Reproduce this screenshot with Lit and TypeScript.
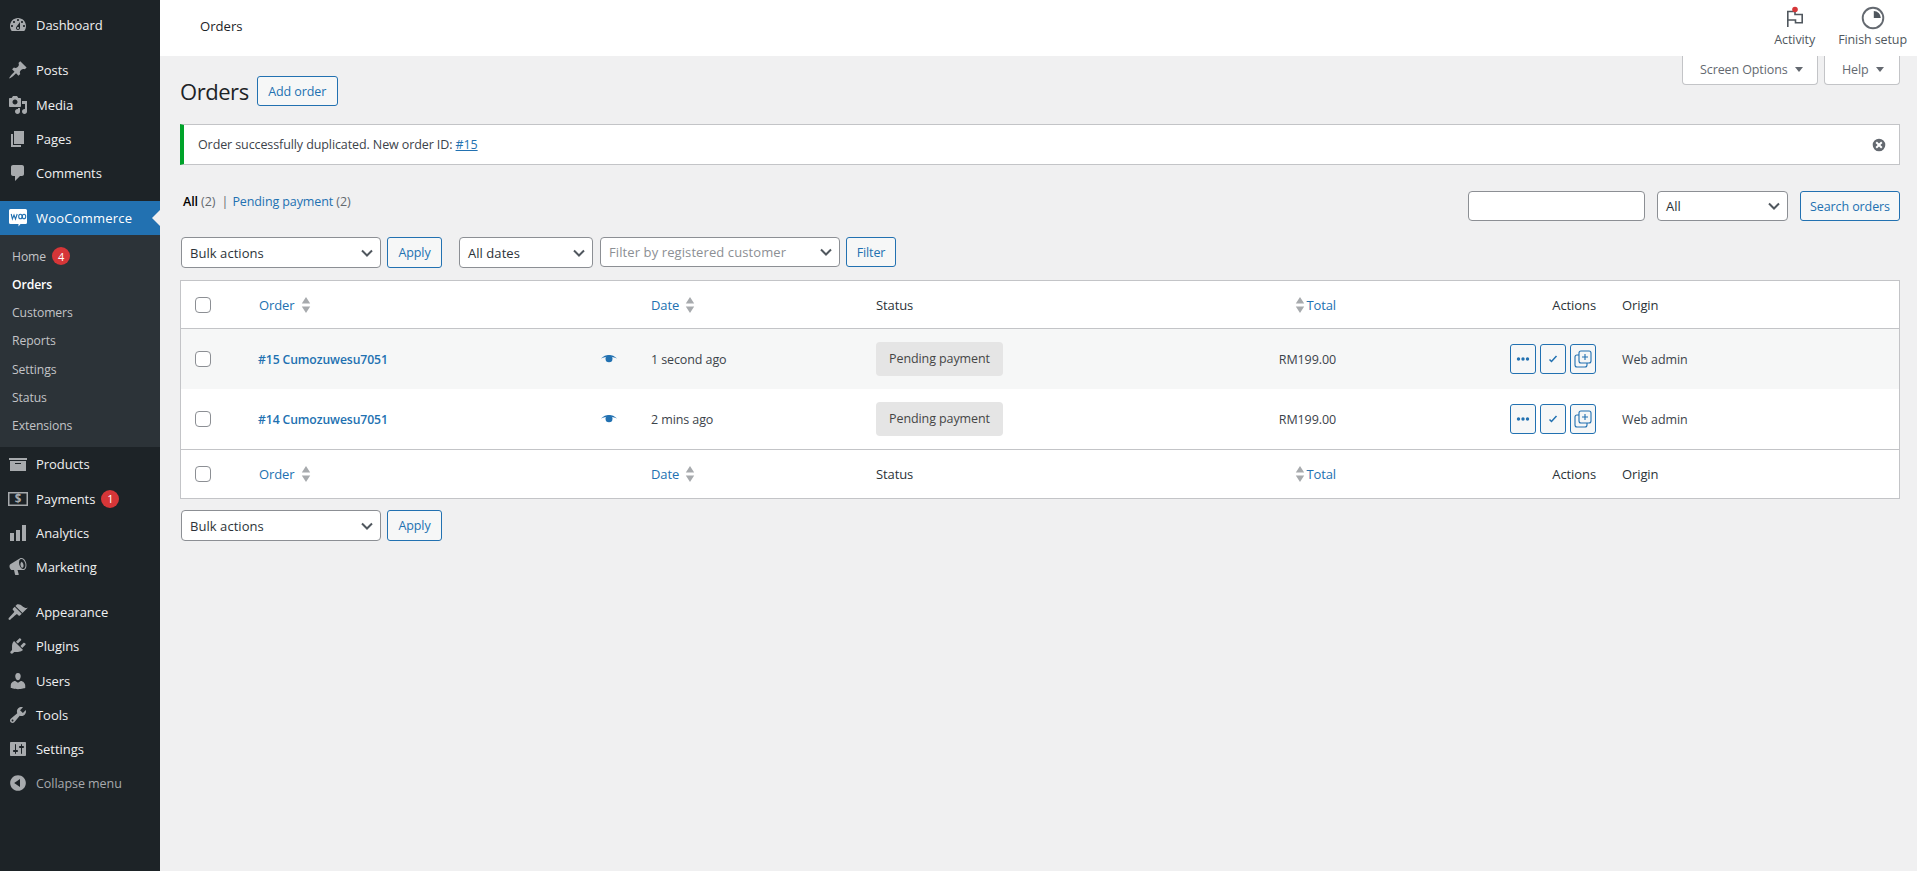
import { LitElement, html, css } from "lit";
import { customElement } from "lit/decorators.js";

const ICONS: Record<string, string> = {
  dashboard: "M3.76 16h12.48c1.1-1.37 1.76-3.11 1.76-5 0-4.42-3.58-8-8-8s-8 3.58-8 8c0 1.89.66 3.63 1.76 5zM10 4c.55 0 1 .45 1 1s-.45 1-1 1-1-.45-1-1 .45-1 1-1zM6 6c.55 0 1 .45 1 1s-.45 1-1 1-1-.45-1-1 .45-1 1-1zm8 0c.55 0 1 .45 1 1s-.45 1-1 1-1-.45-1-1 .45-1 1-1zm-5.37 5.55L12 7v6c0 1.1-.9 2-2 2s-2-.9-2-2c0-.57.24-1.08.63-1.45zM4 10c.55 0 1 .45 1 1s-.45 1-1 1-1-.45-1-1 .45-1 1-1zm12 0c.55 0 1 .45 1 1s-.45 1-1 1-1-.45-1-1 .45-1 1-1zm-5 3c0-.55-.45-1-1-1s-1 .45-1 1 .45 1 1 1 1-.45 1-1z",
  post: "M10.44 3.02l1.82-1.82 6.36 6.35-1.83 1.82c-1.05-.68-2.48-.57-3.41.36l-.75.75c-.92.93-1.04 2.35-.35 3.41l-1.83 1.82-2.41-2.41-2.8 2.79c-.42.42-3.38 2.71-3.8 2.29s1.86-3.39 2.28-3.81l2.79-2.79L4.1 9.36l1.83-1.82c1.05.69 2.48.57 3.41-.36l.75-.75c.93-.92 1.05-2.35.35-3.41z",
  media: "M13 11V4c0-.55-.45-1-1-1h-1.67L9 1H5L3.67 3H2c-.55 0-1 .45-1 1v7c0 .55.45 1 1 1h10c.55 0 1-.45 1-1zM7 4.5c1.38 0 2.5 1.12 2.5 2.5S8.38 9.5 7 9.5 4.5 8.38 4.5 7 5.62 4.5 7 4.5zM14 6h5v10.5c0 1.38-1.12 2.5-2.5 2.5S14 17.88 14 16.5s1.12-2.5 2.5-2.5c.17 0 .34.02.5.05V9h-3V6zm-4 8.05V13h2v3.5c0 1.38-1.12 2.5-2.5 2.5S7 17.88 7 16.5 8.12 14 9.5 14c.17 0 .34.02.5.05z",
  page: "M6 15V2h10v13H6zm-1 1h8v2H3V5h2v11z",
  comments: "M5 2h9c1.1 0 2 .9 2 2v7c0 1.1-.9 2-2 2h-2l-5 5v-5H5c-1.1 0-2-.9-2-2V4c0-1.1.9-2 2-2z",
  archive: "M19 4v2H1V4h18zM2 7h16v10H2V7zm11 3V9H7v1h6z",
  chart: "M18 18V2h-4v16h4zm-6 0V7H8v11h4zm-6 0v-8H2v8h4z",
  megaphone: "M18.15 5.94c.46 1.62.38 3.22-.02 4.48-.42 1.28-1.26 2.18-2.3 2.48-.16.06-.26.06-.4.06-.06.02-.12.02-.18.02-.06.02-.14.02-.22.02H9.5l1.3 4.5c.02.14-.06.26-.14.34-.08.1-.24.16-.34.16H7.5c-.1 0-.26-.06-.34-.16-.08-.08-.16-.2-.14-.34l-1-4.5H4.25c-.5.06-1.08-.18-1.54-.62s-.88-1.08-1.06-1.88c-.24-.8-.2-1.56-.02-2.2.18-.62.58-1.08 1.06-1.3l9-5.42c.1-.06.18-.1.24-.16.06-.04.14-.08.24-.12.16-.08.28-.12.5-.18 1.04-.3 2.24.1 3.22.98s1.84 2.24 2.26 3.86zm-2.58 5.98c.4-.1.74-.34 1.04-.7.58-.7.86-1.76.86-3.04 0-.64-.1-1.3-.28-1.98-.34-1.36-1.02-2.5-1.78-3.24s-1.68-1.1-2.46-.88c-.82.22-1.4.96-1.7 2-.32 1.04-.28 2.36.06 3.72.38 1.36 1 2.5 1.8 3.24.78.74 1.62 1.1 2.46.88zm-2.54-7.08c.22-.04.42-.02.62.04.38.16.76.48 1.1 1s.58 1.14.7 1.84c.16.68.16 1.34.04 1.9-.14.56-.44 1.02-.89 1.14-.42.12-.88-.14-1.24-.62-.34-.5-.62-1.12-.78-1.8-.18-.68-.2-1.36-.02-1.92.14-.54.42-.98.9-1.08z",
  appearance: "M14.48 11.06L7.41 3.99l1.5-1.5c.5-.56 2.3-.47 3.51.32 1.21.8 1.43 1.28 2.91 2.1 1.18.64 2.45 1.26 4.45.85zm-.71.71L6.7 4.7 4.93 6.47c-.39.39-.39 1.02 0 1.41l1.06 1.06c.39.39.39 1.03 0 1.42-.6.6-5.4 6.1-5.4 6.1-.51.51.87 1.89 1.38 1.38 0 0 5.5-4.8 6.1-5.4.39-.39 1.02-.39 1.41 0l1.06 1.06c.39.39 1.02.39 1.41 0z",
  plugins: "M13.11 4.36L9.87 7.6 8 5.73l3.24-3.24c.35-.34 1.05-.2 1.56.32.52.51.66 1.21.31 1.55zm-8 1.77l.91-1.12 9.01 9.01-1.19.84c-.71.71-2.63 1.16-3.82 1.16H6.14L4.9 17.26c-.59.59-1.54.59-2.12 0-.59-.58-.59-1.53 0-2.12l1.24-1.24v-3.88c0-1.13.4-3.19 1.09-3.89zm7.26 3.97l3.24-3.24c.34-.35 1.04-.21 1.55.31.52.51.66 1.21.31 1.55l-3.24 3.25z",
  users: "M10 9.25c-2.27 0-2.73-3.44-2.73-3.44C7 4.02 7.82 2 9.97 2c2.16 0 2.98 2.02 2.71 3.81 0 0-.41 3.44-2.68 3.44zm0 2.57L12.72 10c2.39 0 4.52 2.33 4.52 4.53v2.49s-3.65 1.13-7.24 1.13c-3.65 0-7.24-1.13-7.24-1.13v-2.49c0-2.25 1.94-4.48 4.47-4.48z",
  tools: "M16.68 9.77c-1.34 1.34-3.3 1.67-4.95.99l-5.41 6.52c-.99.99-2.59.99-3.58 0s-.99-2.59 0-3.57l6.52-5.42c-.68-1.65-.35-3.61.99-4.95 1.28-1.28 3.12-1.62 4.72-1.06l-2.89 2.89 2.82 2.82 2.86-2.87c.53 1.58.18 3.39-1.08 4.65zM3.81 16.21c.4.39 1.04.39 1.43 0 .4-.4.4-1.04 0-1.43-.39-.4-1.03-.4-1.43 0-.39.39-.39 1.03 0 1.43z",
  settings: "M18 16V4c0-.55-.45-1-1-1H3c-.55 0-1 .45-1 1v12c0 .55.45 1 1 1h14c.55 0 1-.45 1-1zM8 11h1c.55 0 1 .45 1 1s-.45 1-1 1H8v1.5c0 .28-.22.5-.5.5s-.5-.22-.5-.5V13H6c-.55 0-1-.45-1-1s.45-1 1-1h1V5.5c0-.28.22-.5.5-.5s.5.22.5.5V11zm5-2h-1c-.55 0-1-.45-1-1s.45-1 1-1h1V5.5c0-.28.22-.5.5-.5s.5.22.5.5V7h1c.55 0 1 .45 1 1s-.45 1-1 1h-1v5.5c0 .28-.22.5-.5.5s-.5-.22-.5-.5V9z",
  collapse: "M10 2.16c4.33 0 7.84 3.51 7.84 7.84s-3.51 7.84-7.84 7.84S2.16 14.33 2.16 10 5.71 2.16 10 2.16zm2 11.72V6.12L6.18 9.97z",
};

const dash = (k: string) => html`<svg class="dash" viewBox="0 0 20 20"><path d=${ICONS[k]}></path></svg>`;
const chevron = html`<svg class="chev" viewBox="0 0 16 16"><path d="M3 5.500 8 10.500 13 5.500" fill="none" stroke="currentColor" stroke-width="2"></path></svg>`;
const sort = html`<svg class="sort" viewBox="0 0 10 16"><path d="M5 0l4.200 6.400H.8zM5 16 .8 9.600h8.400z"></path></svg>`;
const eye = html`<svg class="eye" viewBox="0 0 16 10"><path d="M0 4.500C2.500 2 5 1 8 1s5.500 1 8 3.500C13.500 3.200 11 2.700 8 2.700S2.500 3.200 0 4.500z"></path><circle cx="8" cy="4.700" r="3.500"></circle></svg>`;

@customElement("app-root")
export class AppRoot extends LitElement {
  static styles = css`
    :host {
      display: flex;
      width: 100%;
      min-height: 871px;
      background: #f0f0f1;
      font-family: "Open Sans", "Noto Sans", sans-serif;
      font-size: 12.5px;
      color: #3c434a;
    }
    a { color: #2271b1; text-decoration: none; }
    .side {
      width: 160px;
      flex: none;
      background: #1d2327;
      padding-top: 8px;
      box-sizing: border-box;
    }
    .item {
      height: 34.2px;
      display: flex;
      align-items: center;
      color: #f0f0f1;
      font-size: 13px;
      letter-spacing: -0.05px;
    }
    .item .dash { width: 20px; height: 20px; margin: 0 8px; fill: #a7aaad; flex: none; }
    .sep { height: 11.2px; }
    .item.cur { height: 34px; background: #2271b1; color: #fff; position: relative; letter-spacing: 0.22px; }
    .item.cur::after {
      content: "";
      position: absolute;
      right: 0;
      top: 50%;
      margin-top: -8px;
      border: 8px solid transparent;
      border-right-color: #f0f0f1;
    }
    .item.dim { color: #a7aaad; font-size: 12.5px; }
    .badge {
      display: inline-flex;
      width: 18px;
      height: 18px;
      border-radius: 50%;
      background: #d63638;
      color: #fff;
      font-size: 11px;
      align-items: center;
      justify-content: center;
      margin-left: 6px;
    }
    .sub { background: #2c3338; padding: 7px 0 7.6px; }
    .sub div {
      height: 28.2px;
      display: flex;
      align-items: center;
      padding-left: 12px;
      color: #c3c4c7;
      font-size: 12.2px;
      letter-spacing: -0.1px;
    }
    .sub div.on { color: #fff; font-weight: 600; }
    .wrap { flex: 1; min-width: 0; position: relative; }
    .top {
      height: 56px;
      background: #fff;
      display: flex;
      justify-content: space-between;
      align-items: flex-start;
      padding: 0 10px 0 40px;
    }
    .top h2 { margin: 17px 0 0; font-size: 13.1px; font-weight: 500; color: #1d2327; line-height: 18px; }
    .tools { display: flex; gap: 23px; }
    .tool { display: flex; flex-direction: column; align-items: center; color: #50575e; font-size: 12.5px; padding-top: 5px; letter-spacing: -0.1px; }
    .tool svg { width: 26px; height: 26px; margin-bottom: 1px; }
    .tool span { line-height: 16px; }
    .meta {
      position: absolute;
      top: 56px;
      right: 17px;
      display: flex;
      gap: 6px;
    }
    .meta div {
      height: 29px;
      box-sizing: border-box;
      background: #fff;
      border: 1px solid #c3c4c7;
      border-top: 0;
      border-radius: 0 0 4px 4px;
      padding: 0 0 2px 17px;
      display: flex;
      align-items: center;
      gap: 7px;
      color: #646970;
      font-size: 12.5px;
      letter-spacing: -0.1px;
    }
    .meta .m1 { width: 136px; }
    .meta .m2 { width: 76px; }
    .meta i { border: 4px solid transparent; border-top: 5px solid #646970; border-bottom: 0; margin-top: 1px; }
    .body { padding: 20px 17px 0 20px; }
    .head { display: flex; align-items: center; gap: 8px; height: 30px; }
    h1 { margin: 0; font-size: 22px; font-weight: 400; color: #1d2327; letter-spacing: -0.45px; }
    .btn {
      height: 30px;
      box-sizing: border-box;
      border: 1px solid #2271b1;
      border-radius: 3px;
      background: #f6f7f7;
      color: #2271b1;
      font-size: 12.5px;
      display: inline-flex;
      align-items: center;
      justify-content: center;
      letter-spacing: -0.1px;
      flex: none;
    }
    .add { width: 81px; }
    .notice {
      margin-top: 18px;
      height: 41px;
      box-sizing: border-box;
      background: #fff;
      border: 1px solid #c3c4c7;
      border-left: 4px solid #00a32a;
      display: flex;
      align-items: center;
      justify-content: space-between;
      padding: 0 13px 0 14px;
      color: #3c434a;
      letter-spacing: -0.1px;
    }
    .notice a { text-decoration: underline; }
    .notice svg { width: 14px; height: 14px; fill: #646970; }
    .filters { display: flex; justify-content: space-between; margin-top: 26px; height: 30px; }
    .views { padding: 2px 0 0 3px; line-height: 18px; letter-spacing: -0.1px; color: #646970; }
    .views b { font-weight: 600; color: #000; }
    .views .bar { margin: 0 1px 0 3px; }
    .search { display: flex; gap: 12px; }
    .input {
      width: 177px;
      height: 30px;
      box-sizing: border-box;
      background: #fff;
      border: 1px solid #8c8f94;
      border-radius: 4px;
    }
    .sel {
      height: 31px;
      box-sizing: border-box;
      background: #fff;
      border: 1px solid #8c8f94;
      border-radius: 4px;
      padding: 0 5px 0 8px;
      display: flex;
      align-items: center;
      justify-content: space-between;
      color: #2c3338;
      font-size: 13px;
      letter-spacing: 0.05px;
      flex: none;
    }
    .sel.tall30 { height: 30px; }
    .chev { width: 16px; height: 16px; color: #50575e; flex: none; }
    .nav { display: flex; align-items: flex-start; margin-top: 16px; margin-left: 1px; }
    .nav.bottom { margin-top: 11px; }
    .sp6 { margin-left: 6px; }
    .sp7 { margin-left: 7px; }
    .sp17 { margin-left: 17px; }
    .w131 { width: 131px; }
    .w200 { width: 200px; }
    .w134 { width: 134px; }
    .w240 { width: 240px; }
    .w100 { width: 100px; }
    .w55 { width: 55px; height: 31px; }
    .w50 { width: 50px; }
    .ph { color: #8c8f94; font-size: 13px; letter-spacing: 0.1px; }
    table {
      width: 100%;
      table-layout: fixed;
      border-collapse: separate;
      border-spacing: 0;
      background: #fff;
      border: 1px solid #c3c4c7;
      margin-top: 12px;
      font-size: 12.5px;
      letter-spacing: -0.1px;
    }
    .c1 { width: 70px; } .c2 { width: 392px; } .c3 { width: 225px; } .c4 { width: 240px; } .c5 { width: 236px; } .c6 { width: 260px; }
    th, td { box-sizing: border-box; padding: 0 8px; text-align: left; font-weight: 400; vertical-align: middle; }
    thead th { height: 48px; border-bottom: 1px solid #c3c4c7; color: #2c3338; font-size: 13px; }
    tfoot th { height: 49px; border-top: 1px solid #c3c4c7; color: #2c3338; font-size: 13px; }
    tbody td { height: 60px; }
    tbody tr:nth-child(odd) td { background: #f6f7f7; }
    th.cb, td.cb { padding-left: 14px; }
    .box { appearance: none; display: block; width: 16px; height: 16px; box-sizing: border-box; background: #fff; border: 1px solid #8c8f94; border-radius: 4px; margin: 0; }
    .sort { width: 10px; height: 16px; fill: #a7aaad; vertical-align: -3px; margin-left: 6px; }
    th.r, td.r { text-align: right; }
    th.origin, td.origin { padding-left: 18px; }
    .total .sort { margin: 0 1px 0 0; }
    .ordercell { display: flex; justify-content: space-between; align-items: center; padding-right: 18px; }
    .ordername { font-weight: 600; font-size: 12.2px; margin-left: -1px; }
    .eye { width: 16px; height: 10px; fill: #2271b1; }
    .pill {
      display: inline-flex;
      height: 34px;
      width: 127px;
      align-items: center;
      justify-content: center;
      background: #e5e5e5;
      border-radius: 4px;
      color: #454545;
      margin-bottom: 1px;
    }
    .acts { display: flex; justify-content: flex-end; gap: 4px; }
    .acts .btn { width: 26px; border-radius: 3px; }
    .acts svg { display: block; }
    .woo { fill: #fff; }
    .wooline { fill: none; stroke: #2271b1; stroke-width: 1.1; }
    .pay { fill: none; stroke: #a7aaad; stroke-width: 1.5; }
    .dollar { fill: #a7aaad; font-size: 11.5px; font-weight: 700; font-family: "Open Sans", sans-serif; text-anchor: middle; }
    .stroke { fill: none; stroke: #50575e; stroke-width: 1.6; }
    .ring { fill: none; stroke: #646970; stroke-width: 1.9; }
    .wedge { fill: #50575e; }
    .dot { fill: #d63638; stroke: none; }
    .d3 { fill: #2271b1; }
    .lines { fill: none; stroke: #2271b1; stroke-width: 1.1; }
    .check { fill: none; stroke: #2271b1; stroke-width: 1.5; }
  `;

  renderHead() {
    return html`<tr>
      <th class="cb c1"><input type="checkbox" class="box"></th>
      <th class="c2"><a href="#">Order</a>${sort}</th>
      <th class="c3"><a href="#">Date</a>${sort}</th>
      <th class="c4">Status</th>
      <th class="r total c5">${sort}<a href="#">Total</a></th>
      <th class="r c6">Actions</th>
      <th class="origin">Origin</th>
    </tr>`;
  }

  renderRow(name: string, date: string) {
    return html`<tr>
      <td class="cb"><input type="checkbox" class="box"></td>
      <td><div class="ordercell"><a href="#" class="ordername">${name}</a>${eye}</div></td>
      <td>${date}</td>
      <td><span class="pill">Pending payment</span></td>
      <td class="r">RM199.00</td>
      <td><div class="acts">
        <span class="btn"><svg width="14" height="14" viewBox="0 0 14 14" class="d3"><circle cx="2.500" cy="7" r="1.700"/><circle cx="7" cy="7" r="1.700"/><circle cx="11.500" cy="7" r="1.700"/></svg></span>
        <span class="btn"><svg width="12" height="12" viewBox="0 0 12 12"><path class="check" d="M2.500 6.500 4.500 8.500 9.500 3"/></svg></span>
        <span class="btn"><svg width="20" height="20" viewBox="0 0 20 20" class="lines"><rect x="6" y="2" width="12" height="12" rx="2"/><path d="M9 8h6M12 5v6"/><path d="M6 6H4a2 2 0 0 0-2 2v8a2 2 0 0 0 2 2h8a2 2 0 0 0 2-2v-2"/></svg></span>
      </div></td>
      <td class="origin">Web admin</td>
    </tr>`;
  }

  render() {
    const m = (k: string, label: string) => html`<div class="item">${dash(k)}<span>${label}</span></div>`;
    return html`
      <nav class="side">
        ${m("dashboard", "Dashboard")}
        <div class="sep"></div>
        ${m("post", "Posts")}
        ${m("media", "Media")}
        ${m("page", "Pages")}
        ${m("comments", "Comments")}
        <div class="sep"></div>
        <div class="item cur">
          <svg class="dash" viewBox="0 0 20 20"><path class="woo" d="M2.500 1h15A1.500 1.500 0 0 1 19 2.500v12a1.500 1.500 0 0 1-1.500 1.500H12.500l-2 2.500V16H2.500A1.500 1.500 0 0 1 1 14.500v-12A1.500 1.500 0 0 1 2.500 1z"/><path class="wooline" d="M3.200 6 4.400 11 6 7 7.500 11 9.200 6"/><ellipse class="wooline" cx="12.400" cy="8.500" rx="1.700" ry="2.300"/><ellipse class="wooline" cx="16" cy="8.500" rx="1.700" ry="2.300"/></svg>
          <span>WooCommerce</span>
        </div>
        <div class="sub">
          <div>Home<span class="badge">4</span></div>
          <div class="on">Orders</div>
          <div>Customers</div>
          <div>Reports</div>
          <div>Settings</div>
          <div>Status</div>
          <div>Extensions</div>
        </div>
        ${m("archive", "Products")}
        <div class="item">
          <svg class="dash" viewBox="0 0 20 20"><rect class="pay" x="0.750" y="3.750" width="18.500" height="12.500"/><text class="dollar" x="10" y="14.200">$</text></svg>
          <span>Payments</span><span class="badge">1</span>
        </div>
        ${m("chart", "Analytics")}
        ${m("megaphone", "Marketing")}
        <div class="sep"></div>
        ${m("appearance", "Appearance")}
        ${m("plugins", "Plugins")}
        ${m("users", "Users")}
        ${m("tools", "Tools")}
        ${m("settings", "Settings")}
        <div class="item dim">${dash("collapse")}<span>Collapse menu</span></div>
      </nav>
      <div class="wrap">
        <header class="top">
          <h2>Orders</h2>
          <div class="tools">
            <div class="tool">
              <svg viewBox="0 0 26 26"><path class="stroke" d="M5.800 22V6.500H13v3h7.200v8.200H13.500v-2.700H5.800"/><circle class="dot" cx="13" cy="4.500" r="2.800"/></svg>
              <span>Activity</span>
            </div>
            <div class="tool">
              <svg viewBox="0 0 26 26"><circle class="ring" cx="13" cy="13" r="10.300"/><path class="wedge" d="M13.800 6v7h7a7.200 7.200 0 0 0-7-7z"/></svg>
              <span>Finish setup</span>
            </div>
          </div>
        </header>
        <div class="meta">
          <div class="m1">Screen Options <i></i></div>
          <div class="m2">Help <i></i></div>
        </div>
        <main class="body">
          <div class="head">
            <h1>Orders</h1>
            <span class="btn add">Add order</span>
          </div>
          <div class="notice">
            <span>Order successfully duplicated. New order ID: <a href="#">#15</a></span>
            <svg viewBox="0 0 20 20"><path fill-rule="evenodd" d="M10 1a9 9 0 1 1 0 18 9 9 0 0 1 0-18zM7 5 5 7l3 3-3 3 2 2 3-3 3 3 2-2-3-3 3-3-2-2-3 3z"/></svg>
          </div>
          <div class="filters">
            <div class="views"><b>All</b> (2) <span class="bar">|</span> <a href="#">Pending payment</a> (2)</div>
            <div class="search">
              <div class="input"></div>
              <div class="sel tall30 w131"><span>All</span>${chevron}</div>
              <span class="btn w100">Search orders</span>
            </div>
          </div>
          <div class="nav">
            <div class="sel w200"><span>Bulk actions</span>${chevron}</div>
            <span class="btn sp6 w55">Apply</span>
            <div class="sel sp17 w134"><span>All dates</span>${chevron}</div>
            <div class="sel tall30 sp7 w240"><span class="ph">Filter by registered customer</span>${chevron}</div>
            <span class="btn sp6 w50">Filter</span>
          </div>
          <table>
            <thead>${this.renderHead()}</thead>
            <tbody>
              ${this.renderRow("#15 Cumozuwesu7051", "1 second ago")}
              ${this.renderRow("#14 Cumozuwesu7051", "2 mins ago")}
            </tbody>
            <tfoot>${this.renderHead()}</tfoot>
          </table>
          <div class="nav bottom">
            <div class="sel w200"><span>Bulk actions</span>${chevron}</div>
            <span class="btn sp6 w55">Apply</span>
          </div>
        </main>
      </div>
    `;
  }
}
